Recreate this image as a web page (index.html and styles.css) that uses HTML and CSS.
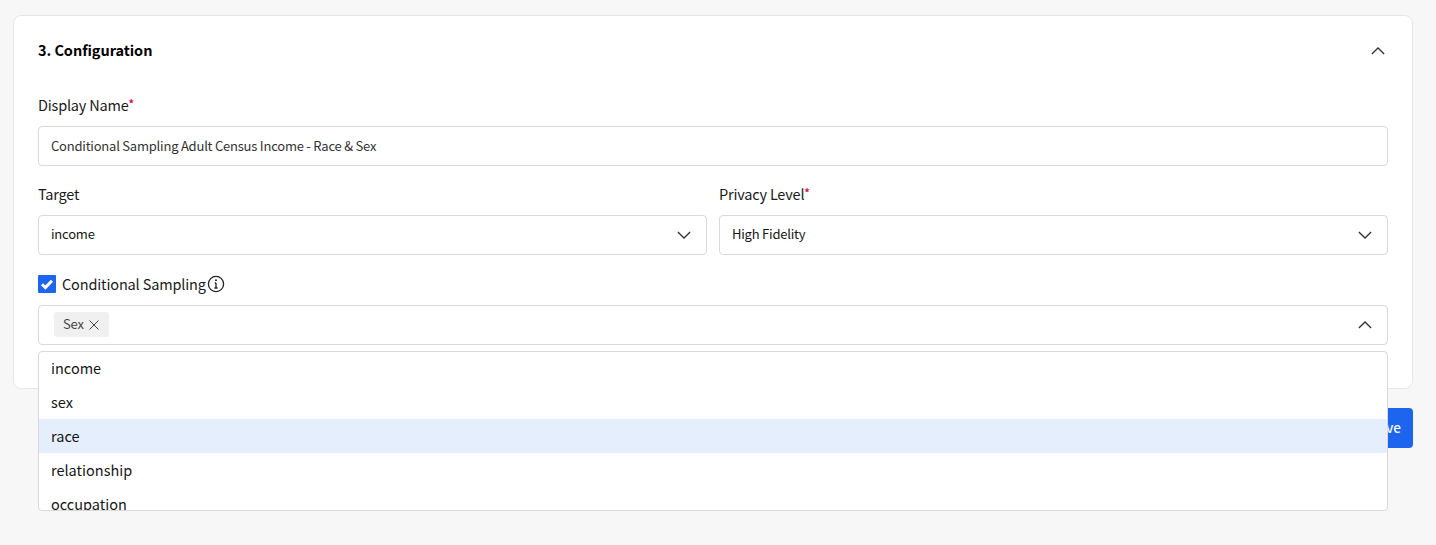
FILE: index.html
```html
<!DOCTYPE html>
<html lang="en">
<head>
<meta charset="utf-8">
<title>Configuration</title>
<link rel="stylesheet" href="styles.css">
</head>
<body>
<main class="page">
  <section class="card">
    <header class="card-head">
      <h2 class="card-title">3. Configuration</h2>
      <svg class="chev" viewBox="0 0 16 9"><path d="M1 8l7-7 7 7"/></svg>
    </header>
    <div class="field">
      <label class="label">Display Name<span class="req">*</span></label>
      <div class="control"><span class="value">Conditional Sampling Adult Census Income - Race &amp; Sex</span></div>
    </div>
    <div class="cols">
      <div class="field">
        <label class="label">Target</label>
        <div class="control select"><span class="value">income</span><svg class="chev" viewBox="0 0 16 9"><path d="M1 1l7 7 7-7"/></svg></div>
      </div>
      <div class="field">
        <label class="label">Privacy Level<span class="req">*</span></label>
        <div class="control select"><span class="value">High Fidelity</span><svg class="chev" viewBox="0 0 16 9"><path d="M1 1l7 7 7-7"/></svg></div>
      </div>
    </div>
    <div class="check-row">
      <span class="checkbox"><svg viewBox="0 0 18 18"><path d="M4 9.2l3.4 3.4L14 5.7"/></svg></span>
      <span class="check-label">Conditional Sampling</span>
      <svg class="info" viewBox="0 0 18 18"><circle cx="9" cy="9" r="7.6"/><path d="M9 8v5M7.4 13h3.2M7.8 8H9"/><circle class="dot" cx="9" cy="5.2" r="1"/></svg>
    </div>
    <div class="multi">
      <div class="control select tags">
        <span class="tag"><span class="tag-text">Sex</span><svg viewBox="0 0 12 12"><path d="M1.5 1.5l9 9M10.5 1.5l-9 9"/></svg></span>
        <svg class="chev" viewBox="0 0 16 9"><path d="M1 8l7-7 7 7"/></svg>
      </div>
      <ul class="menu">
        <li class="option">income</li>
        <li class="option">sex</li>
        <li class="option active">race</li>
        <li class="option">relationship</li>
        <li class="option">occupation</li>
      </ul>
    </div>
  </section>
  <div class="actions"><button class="btn">Save</button></div>
</main>
</body>
</html>
```
FILE: styles.css
```css
* { box-sizing: border-box; }
html, body { margin: 0; height: 100%; }
body {
  background: #f7f7f7;
  color: #161616;
  font-family: "Noto Sans CJK SC", "Noto Sans", sans-serif;
  overflow: hidden;
}
.page { padding: 15px 23px 0 13px; }
.card {
  background: #fff;
  border: 1px solid #e6e6e6;
  border-radius: 8px;
  padding: 24px 24px 43px;
  height: 374px;
}
.card-head {
  display: flex;
  justify-content: space-between;
  align-items: center;
  height: 22px;
  margin-bottom: 33px;
  padding-right: 3px;
}
.card-title { margin: 0 0 2px; font-size: 14.5px; letter-spacing: -0.05px; line-height: 20px; font-weight: 700; color: #000; }
.chev { width: 14px; height: 8px; fill: none; stroke: #333; stroke-width: 1.5; flex: none; }
.field { margin-bottom: 18px; min-width: 0; }
.label { display: block; font-size: 14.5px; letter-spacing: -0.2px; line-height: 20px; margin-bottom: 11px; color: #1a1a1a; }
.req { color: #e0103a; font-size: 11px; font-weight: 700; letter-spacing: 0; vertical-align: 3px; line-height: 0; }
.control {
  height: 40px;
  border: 1px solid #d9d9d9;
  border-radius: 4px;
  background: #fff;
  padding: 0 12px;
  display: flex;
  align-items: center;
  font-size: 13px;
  letter-spacing: -0.22px;
  color: #333;
}
.value { margin-bottom: 2px; }
.select { justify-content: space-between; color: #161616; padding-right: 15px; }
.select .value { margin-bottom: 3px; }
.cols { display: grid; grid-template-columns: 1fr 1fr; column-gap: 12px; }
.check-row { display: flex; align-items: center; height: 18px; margin-top: 2px; margin-bottom: 12px; }
.checkbox { width: 18px; height: 18px; background: #1d64ee; border-radius: 1px; display: block; }
.checkbox svg { display: block; fill: none; stroke: #fff; stroke-width: 3; }
.check-label { font-size: 14.5px; letter-spacing: -0.15px; line-height: 20px; margin-left: 6px; color: #1a1a1a; }
.info { width: 18px; height: 18px; fill: none; stroke: #222; stroke-width: 1.3; margin-left: 1px; }
.info .dot { fill: #222; stroke: none; }
.multi { position: relative; }
.tags { padding-left: 15px; }
.tag {
  display: flex;
  align-items: center;
  height: 25px;
  padding: 0 9px 0 9px;
  margin-bottom: 1px;
  background: #f0f0f0;
  border-radius: 3px;
  font-size: 13px;
  color: #444;
}
.tag-text { margin-bottom: 2px; }
.tag svg { width: 12px; height: 12px; margin-left: 4px; fill: none; stroke: #444; stroke-width: 1; }
.menu {
  position: absolute;
  left: 0;
  right: 0;
  top: 46px;
  height: 160px;
  margin: 0;
  padding: 0;
  list-style: none;
  background: #fff;
  border: 1px solid #d9d9d9;
  border-radius: 4px;
  overflow: hidden;
  z-index: 2;
}
.option {
  height: 34px;
  line-height: 34px;
  padding: 0 12px;
  font-size: 14.5px;
  color: #161616;
}
.option:first-child { margin-top: -1px; }
.active { background: #e5eefc; }
.actions { display: flex; justify-content: flex-end; margin-top: 19px; }
.btn {
  height: 40px;
  width: 60px;
  border: 0;
  border-radius: 4px;
  background: #1d64ee;
  color: #fff;
  font: 500 13.5px/36px "Noto Sans CJK SC", "Noto Sans", sans-serif;
  padding: 0 12px 3px;
  text-align: right;
}
```
